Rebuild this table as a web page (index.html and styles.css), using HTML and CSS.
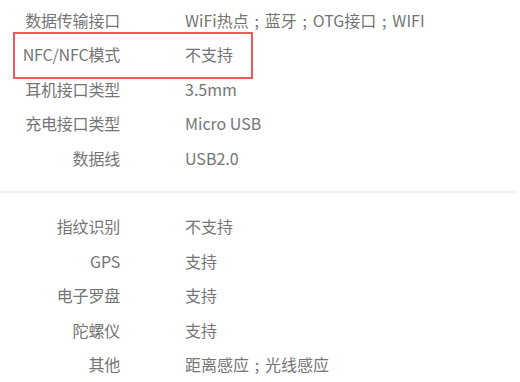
FILE: index.html
```html
<!DOCTYPE html>
<html lang="zh-CN">
<head>
    <meta charset="UTF-8">
    <meta name="viewport" content="width=device-width, initial-scale=1.0">
    <title>规格参数</title>
    <link rel="stylesheet" href="styles.css">
</head>
<body>
    <div class="params">
        <div class="param-group">
            <div class="param-row">
                <span class="param-name">数据传输接口</span>
                <span class="param-value">WiFi热点<span class="sep">;</span>蓝牙<span class="sep">;</span>OTG接口<span class="sep">;</span>WIFI</span>
            </div>
            <div class="param-row highlight">
                <span class="param-name">NFC/NFC模式</span>
                <span class="param-value">不支持</span>
            </div>
            <div class="param-row">
                <span class="param-name">耳机接口类型</span>
                <span class="param-value">3.5mm</span>
            </div>
            <div class="param-row">
                <span class="param-name">充电接口类型</span>
                <span class="param-value">Micro USB</span>
            </div>
            <div class="param-row">
                <span class="param-name">数据线</span>
                <span class="param-value">USB2.0</span>
            </div>
        </div>

        <div class="param-group">
            <div class="param-row">
                <span class="param-name">指纹识别</span>
                <span class="param-value">不支持</span>
            </div>
            <div class="param-row">
                <span class="param-name">GPS</span>
                <span class="param-value">支持</span>
            </div>
            <div class="param-row">
                <span class="param-name">电子罗盘</span>
                <span class="param-value">支持</span>
            </div>
            <div class="param-row">
                <span class="param-name">陀螺仪</span>
                <span class="param-value">支持</span>
            </div>
            <div class="param-row">
                <span class="param-name">其他</span>
                <span class="param-value">距离感应<span class="sep">;</span>光线感应</span>
            </div>
        </div>
    </div>
</body>
</html>
```

FILE: styles.css
```css
body {
    margin: 0;
    background: #fff;
    font-family: "Noto Sans CJK SC", "Noto Sans", sans-serif;
    font-size: 16px;
    color: #757575;
}

.params {
    width: 518px;
}

.param-group {
    padding: 2.75px 0 16px;
}

.param-group + .param-group {
    border-top: 2px solid #f0f0f0;
    padding-top: 15.75px;
}

.param-row {
    display: flex;
    gap: 65px;
    height: 34.5px;
    line-height: 34.5px;
    position: relative;
}

.param-name {
    width: 120px;
    text-align: right;
    white-space: nowrap;
    letter-spacing: -0.2px;
}

.param-value {
    white-space: nowrap;
}

/* list separator, one em wide with the mark in the middle */
.sep {
    display: inline-block;
    width: 1em;
    text-align: center;
}

/* red frame around the highlighted spec */
.highlight::after {
    content: "";
    position: absolute;
    left: 13px;
    top: -5px;
    width: 236px;
    height: 43px;
    border: 2px solid #ef5b5b;
}
```
